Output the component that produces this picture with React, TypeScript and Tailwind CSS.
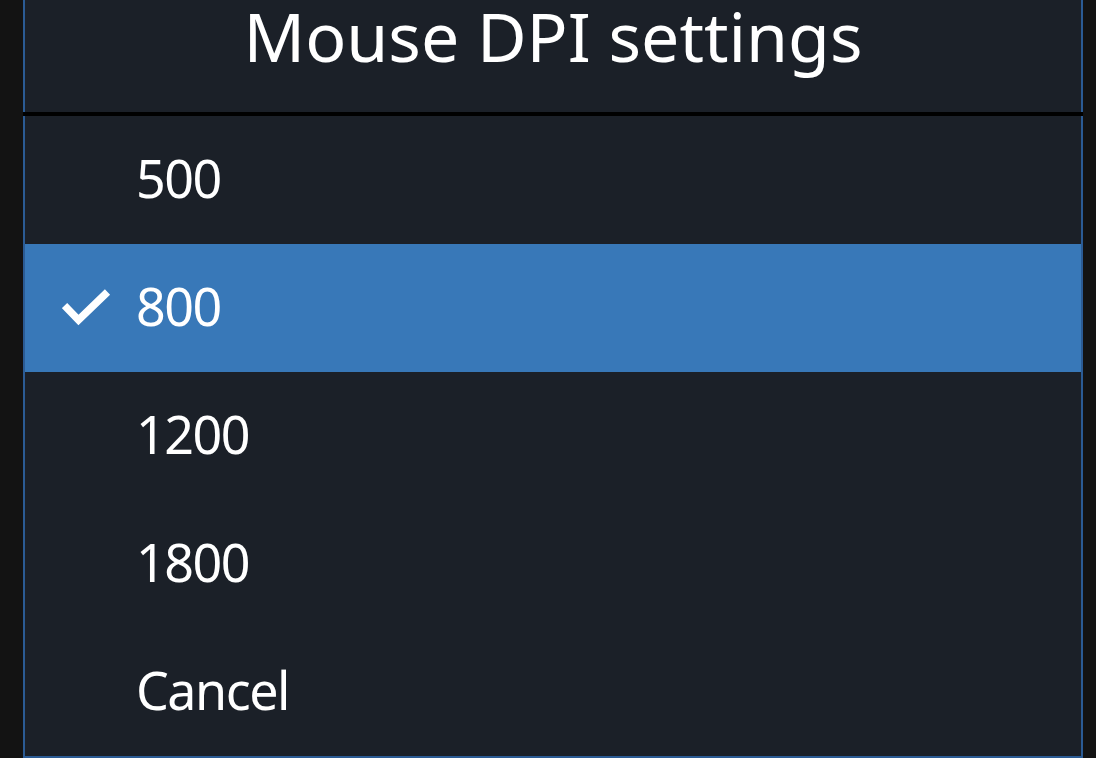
import React from "react";

const options = [
  { label: "500", checked: false },
  { label: "800", checked: true },
  { label: "1200", checked: false },
  { label: "1800", checked: false },
  { label: "Cancel", checked: false },
];

const CheckMark = () => (
  <svg width="50" height="40" viewBox="0 0 50 40" className="block">
    <polyline
      points="2.5,16.5 16.5,31 45.5,3"
      fill="none"
      stroke="#ffffff"
      strokeWidth="7.5"
      strokeLinejoin="miter"
      strokeLinecap="butt"
    />
  </svg>
);

export default function App() {
  return (
    <div
      className="w-full h-[758px] bg-[#131313] overflow-hidden text-white"
      style={{ fontFamily: '"Noto Sans", "Open Sans", sans-serif' }}
    >
      <div className="ml-[23px] w-[1060px] h-full flex flex-col bg-[#1b2028]">
        {/* Titel */}
        <div className="h-[112px] shrink-0 border-x-2 border-[#2b5b94] flex justify-center">
          <h1 className="text-[68px] leading-[1.05]">Mouse DPI settings</h1>
        </div>
        <div className="h-1 shrink-0 bg-black" />

        {/* Auswahl */}
        <ul className="flex-1 border-x-2 border-b-2 border-[#2b5b94]">
          {options.map((o) => (
            <li
              key={o.label}
              className={
                "h-[128px] flex items-center relative " +
                (o.checked ? "bg-[#3878b8]" : "")
              }
            >
              {o.checked && (
                <span className="absolute left-[37px] top-[45px]">
                  <CheckMark />
                </span>
              )}
              <span className="ml-[111px] mb-[4px] text-[52px] leading-none tracking-[-1.5px]">
                {o.label}
              </span>
            </li>
          ))}
        </ul>
      </div>
    </div>
  );
}
